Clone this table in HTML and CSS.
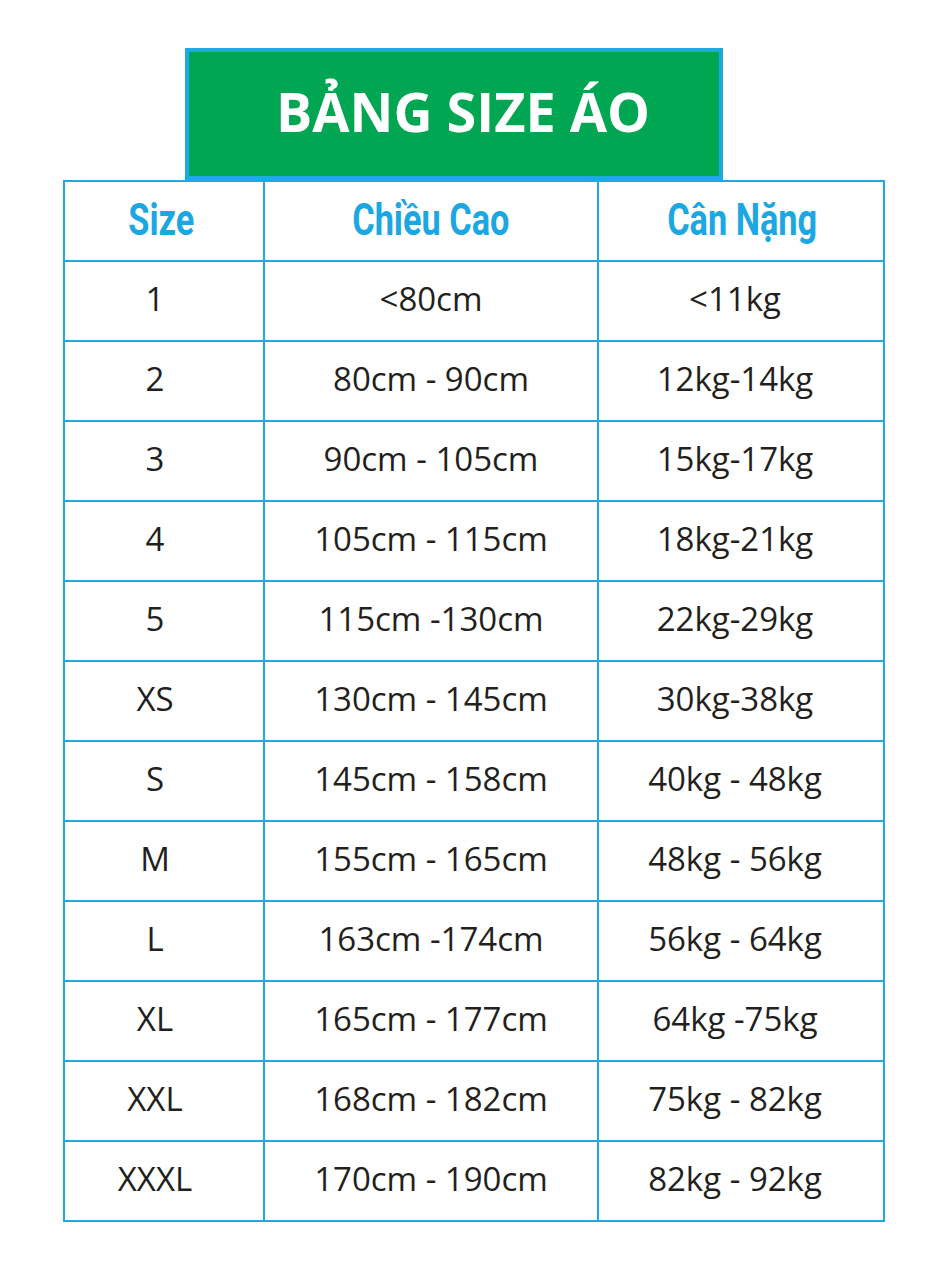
FILE: index.html
```html
<!DOCTYPE html>
<html lang="vi">
<head>
<meta charset="utf-8">
<title>Bảng size áo</title>
<link rel="stylesheet" href="styles.css">
</head>
<body>
<div class="page">
  <div class="title">BẢNG SIZE ÁO</div>
  <div class="table">
    <div class="cell head c1"><span class="narrow">Size</span></div><div class="cell head c2"><span class="narrow">Chiều Cao</span></div><div class="cell head c3"><span class="narrow">Cân Nặng</span></div>
    <div class="cell c1">1</div><div class="cell c2">&lt;80cm</div><div class="cell c3">&lt;11kg</div>
    <div class="cell c1">2</div><div class="cell c2">80cm - 90cm</div><div class="cell c3">12kg-14kg</div>
    <div class="cell c1">3</div><div class="cell c2">90cm - 105cm</div><div class="cell c3">15kg-17kg</div>
    <div class="cell c1">4</div><div class="cell c2">105cm - 115cm</div><div class="cell c3">18kg-21kg</div>
    <div class="cell c1">5</div><div class="cell c2">115cm -130cm</div><div class="cell c3">22kg-29kg</div>
    <div class="cell c1">XS</div><div class="cell c2">130cm - 145cm</div><div class="cell c3">30kg-38kg</div>
    <div class="cell c1">S</div><div class="cell c2">145cm - 158cm</div><div class="cell c3">40kg - 48kg</div>
    <div class="cell c1">M</div><div class="cell c2">155cm - 165cm</div><div class="cell c3">48kg - 56kg</div>
    <div class="cell c1">L</div><div class="cell c2">163cm -174cm</div><div class="cell c3">56kg - 64kg</div>
    <div class="cell c1">XL</div><div class="cell c2">165cm - 177cm</div><div class="cell c3">64kg -75kg</div>
    <div class="cell c1">XXL</div><div class="cell c2">168cm - 182cm</div><div class="cell c3">75kg - 82kg</div>
    <div class="cell c1">XXXL</div><div class="cell c2">170cm - 190cm</div><div class="cell c3">82kg - 92kg</div>
  </div>
</div>
</body>
</html>
```
FILE: styles.css
```css
html, body {
  margin: 0;
  padding: 0;
  background: #ffffff;
}
.page {
  width: 948px;
  height: 1280px;
  padding-top: 48px;
  box-sizing: border-box;
}
.title {
  margin-left: 185px;
  width: 538px;
  height: 132px;
  box-sizing: border-box;
  border: 4px solid #1ea9e3;
  background: #00a651;
  color: #ffffff;
  font-family: "Open Sans", "Noto Sans", sans-serif;
  font-weight: 700;
  font-size: 54px;
  display: flex;
  align-items: center;
  justify-content: center;
  padding-left: 18px;
  padding-bottom: 6px;
}
.table {
  margin-left: 63px;
  width: 822px;
  box-sizing: border-box;
  padding: 2px;
  background: #1ea9e3;
  display: grid;
  grid-template-columns: 198px 332px 284px;
  grid-auto-rows: 78px;
  gap: 2px;
}
.cell {
  background: #ffffff;
  display: flex;
  align-items: center;
  justify-content: center;
  font-family: "Open Sans", "Noto Sans", sans-serif;
  font-size: 33px;
  color: #231f20;
  padding-bottom: 5px;
  box-sizing: border-box;
}
.c1 {
  padding-right: 18px;
}
.c3 {
  padding-right: 12px;
}
.head {
  font-family: "Roboto", "Noto Sans", sans-serif;
  font-weight: 700;
  font-size: 44px;
  color: #1ba8e2;
  padding-bottom: 2px;
}
.head.c1 {
  padding-right: 6px;
}
.head.c3 {
  padding-right: 0;
  padding-left: 2px;
}
.narrow {
  display: inline-block;
  transform: scaleX(0.78);
  white-space: nowrap;
}
```
